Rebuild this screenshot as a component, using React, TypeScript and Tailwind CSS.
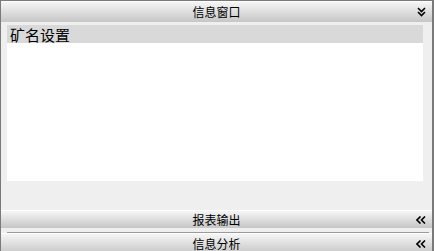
const FONT = { fontFamily: '"Noto Sans CJK SC", "Liberation Sans", sans-serif' };

function ChevronsDown() {
  return (
    <svg width="9" height="10" viewBox="0 0 9 10" className="block">
      <polyline points="1,1 4.5,4.5 8,1" fill="none" stroke="#000" strokeWidth="1.6" />
      <polyline points="1,5 4.5,8.5 8,5" fill="none" stroke="#000" strokeWidth="1.6" />
    </svg>
  );
}

function ChevronsLeft() {
  return (
    <svg width="10" height="8" viewBox="0 0 10 8" className="block">
      <polyline points="4.5,0.5 1,4 4.5,7.5" fill="none" stroke="#000" strokeWidth="1.6" />
      <polyline points="9,0.5 5.5,4 9,7.5" fill="none" stroke="#000" strokeWidth="1.6" />
    </svg>
  );
}

function Bar({ title, down, h }: { title: string; down?: boolean; h: string }) {
  return (
    <div
      className={`relative flex ${h} shrink-0 items-center justify-center border-t border-white bg-gradient-to-b from-[#f6f6f6] to-[#c6c6c6] text-[12px] text-black`}
    >
      <span className="leading-none">{title}</span>
      <span className="absolute right-[6px] top-1/2 -translate-y-1/2">
        {down ? <ChevronsDown /> : <ChevronsLeft />}
      </span>
    </div>
  );
}

export default function App() {
  return (
    <div
      style={FONT}
      className="flex h-[251px] w-[434px] flex-col overflow-hidden border-l border-r-2 border-t border-[#7a7a7a] bg-[#efefef]"
    >
      <Bar title="信息窗口" down h="h-[21px]" />
      <div className="flex h-[188px] shrink-0 flex-col pl-[6px] pr-[9px] pt-[3px] pb-[29px]">
        <div className="flex-1 bg-white">
          <div className="flex h-[18px] items-center bg-[#d9d9d9] pl-[3px] text-[15px] leading-none text-black">
            矿名设置
          </div>
        </div>
      </div>
      <Bar title="报表输出" h="h-[18px]" />
      <div className="flex h-[5px] shrink-0 items-end bg-[#efefef] pl-[6px] pr-[3px]">
        <div className="h-px w-full bg-[#9a9a9a]" />
      </div>
      <Bar title="信息分析" h="h-[21px]" />
    </div>
  );
}
